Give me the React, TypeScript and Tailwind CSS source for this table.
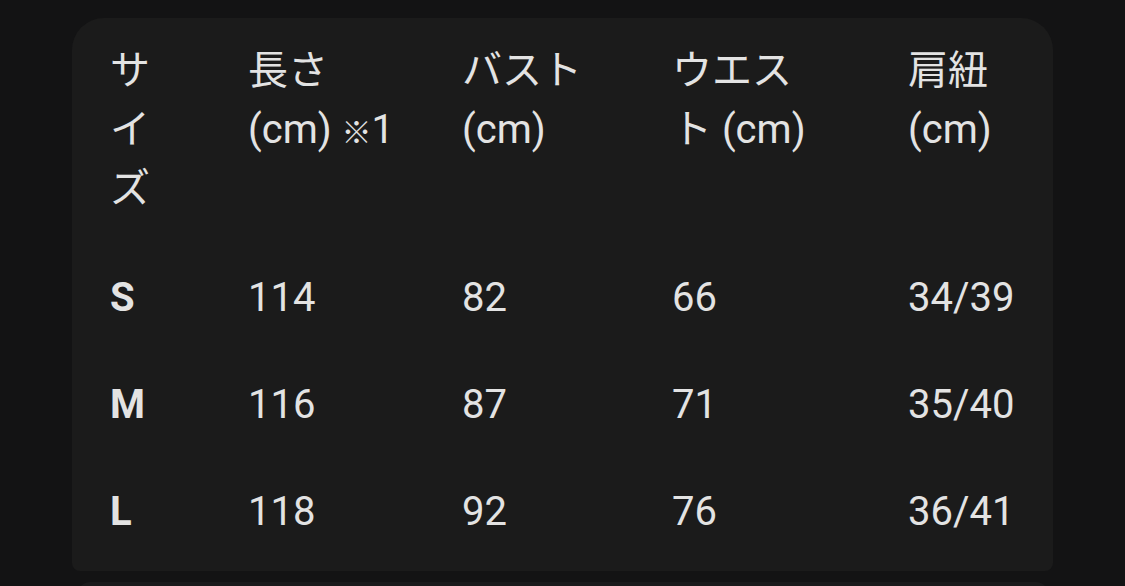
import React from 'react';

type Row = { size: string; length: string; bust: string; waist: string; strap: string };

const rows: Row[] = [
  { size: 'S', length: '114', bust: '82', waist: '66', strap: '34/39' },
  { size: 'M', length: '116', bust: '87', waist: '71', strap: '35/40' },
  { size: 'L', length: '118', bust: '92', waist: '76', strap: '36/41' },
];

const grid = 'grid grid-cols-[138px_214px_210px_236px_1fr] pl-[38px]';

const App: React.FC = () => {
  return (
    <div
      className="h-[586px] w-full overflow-hidden bg-[#131314] text-[#e3e3e3]"
      style={{ fontFamily: 'Roboto, "Noto Sans CJK JP", sans-serif' }}
    >
      <div className="ml-[72px] mt-[18px] w-[981px] rounded-t-[32px] rounded-b-[8px] bg-[#1b1b1b] pt-[23px] pb-[6px] text-[40px] leading-[59px]">
        <div className={`${grid} pb-[26px]`}>
          <div>
            サ<br />イ<br />ズ
          </div>
          <div>
            長さ<br />(cm) <span className="text-[30px] font-bold">※</span>1
          </div>
          <div>
            バスト<br />(cm)
          </div>
          <div>
            ウエス<br />ト (cm)
          </div>
          <div>
            肩紐<br />(cm)
          </div>
        </div>
        {rows.map((r) => (
          <div key={r.size} className={`${grid} py-[24px]`}>
            <div className="font-bold">{r.size}</div>
            <div>{r.length}</div>
            <div>{r.bust}</div>
            <div>{r.waist}</div>
            <div>{r.strap}</div>
          </div>
        ))}
      </div>
      <div className="ml-[78px] mt-[11px] h-[40px] w-[970px] rounded-t-[12px] bg-[#1a1a1b]" />
    </div>
  );
};

export default App;
